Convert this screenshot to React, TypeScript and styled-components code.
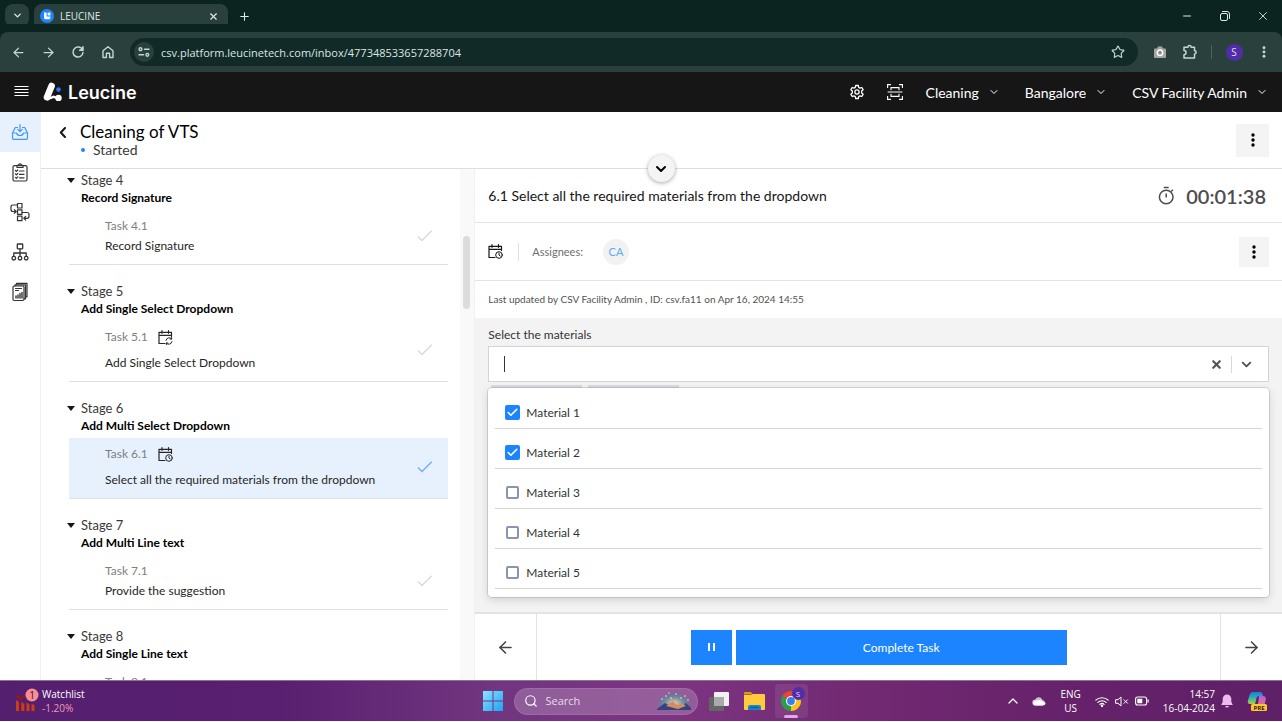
import React from "react";
import styled, { createGlobalStyle, css } from "styled-components";
import { ArrowLeft, ArrowRight, ChevronDown, Check, X, Plus, Star, Search, Minus } from "lucide-react";

const GlobalStyle = createGlobalStyle`
  *, *::before, *::after { box-sizing: border-box; }
  body { margin: 0; background: #fff; }
  button, input { font: inherit; color: inherit; }
  button { border: 0; padding: 0; background: none; cursor: pointer; }
  h1, h2, p, ul, ol { margin: 0; padding: 0; font-weight: 400; list-style: none; }
  a { color: inherit; text-decoration: none; }
  svg { display: block; flex: none; }
`;

const appFont = `Lato, "Liberation Sans", sans-serif`;
const systemFont = `"Open Sans", "Noto Sans", sans-serif`;

const Screen = styled.div`
  display: flex;
  flex-direction: column;
  height: 100vh;
  min-height: 480px;
  padding-bottom: 1px;
  overflow: hidden;
`;

/* ---------- Browser chrome ---------- */

const TabStrip = styled.div`
  display: flex;
  align-items: flex-end;
  height: 32px;
  flex: none;
  padding-left: 5px;
  background: #0b2420;
  color: #dfe9e6;
  font-family: ${systemFont};
  font-size: 10px;
`;

const TabMenuButton = styled.button`
  display: grid;
  place-items: center;
  width: 24px;
  height: 23px;
  margin: 0 5px 5px 0;
  border-radius: 8px;
  background: #2a403c;
`;

const Tab = styled.div`
  display: flex;
  align-items: center;
  gap: 6px;
  width: 194px;
  height: 28px;
  margin-top: 4px;
  padding: 0 9px 4px 6px;
  border-radius: 8px 8px 0 0;
  background: #2a403c;
  line-height: 16px;

  span { flex: 1; }
`;

const NewTabButton = styled.button`
  display: grid;
  place-items: center;
  width: 32px;
  height: 32px;
`;

const WindowControls = styled.div`
  display: flex;
  align-items: center;
  height: 32px;
  margin-left: auto;
`;

const WindowButton = styled.button`
  display: grid;
  place-items: center;
  width: 38px;
  height: 32px;
`;

const Toolbar = styled.div`
  display: flex;
  align-items: center;
  height: 40px;
  flex: none;
  padding: 0 3px;
  border-radius: 8px 8px 0 0;
  background: #2a403c;
  box-shadow: 0 -8px 0 #0b2420;
  color: #c4d8d3;
  font-family: ${systemFont};
`;

const ToolButton = styled.button`
  display: grid;
  place-items: center;
  width: 30px;
  height: 28px;
`;

const AddressBar = styled.label`
  display: flex;
  align-items: center;
  flex: 1;
  height: 28px;
  min-width: 0;
  margin: 0 7px;
  padding: 0 5px 0 4px;
  border-radius: 14px;
  background: #122a27;
  font-size: 11px;

  input {
    flex: 1;
    min-width: 0;
    padding: 0 7px;
    border: 0;
    outline: 0;
    background: none;
    color: #d9e6e2;
  }
`;

const SiteInfo = styled.span`
  display: grid;
  place-items: center;
  width: 20px;
  height: 20px;
  border-radius: 50%;
  background: #2a403c;
`;

const ToolDivider = styled.span`
  width: 1px;
  height: 14px;
  margin: 0 7px 0 6px;
  background: #48625c;
`;

const ProfileBadge = styled.span<{ $size: number }>`
  display: grid;
  place-items: center;
  width: ${(p) => p.$size}px;
  height: ${(p) => p.$size}px;
  border-radius: 50%;
  background: #512da8;
  color: #e4dcf6;
  font-family: ${systemFont};
  font-size: ${(p) => (p.$size > 14 ? 10 : 8)}px;
  line-height: 12px;
`;

/* ---------- Application header ---------- */

const AppHeader = styled.header`
  display: flex;
  align-items: center;
  height: 40px;
  flex: none;
  padding: 0 14px;
  background: #161616;
  color: #fff;
  font-family: ${appFont};
  font-size: 14px;
`;

const Brand = styled.a`
  display: flex;
  align-items: center;
  gap: 5px;
  margin: 0 auto 0 14px;
  font-family: Inter, sans-serif;
  font-size: 18px;
  font-weight: 600;
`;

const HeaderIcon = styled.button`
  display: grid;
  place-items: center;
  width: 38px;
  height: 40px;
`;

const HeaderMenus = styled.nav`
  display: flex;
  gap: 25px;
  margin-left: 12px;
`;

const HeaderMenu = styled.button`
  display: flex;
  align-items: center;
  gap: 9px;
  height: 40px;
`;

/* ---------- Workspace ---------- */

const Workspace = styled.div`
  display: flex;
  flex: 1;
  min-height: 0;
  background: #fff;
  color: #161616;
  font-family: ${appFont};
`;

const Rail = styled.nav`
  display: flex;
  flex-direction: column;
  width: 41px;
  flex: none;
  border-right: 1px solid #f0f0f0;
  color: #333;
`;

const RailLink = styled.a<{ $active?: boolean }>`
  display: grid;
  place-items: center;
  height: 40px;
  ${(p) => p.$active && css`background: #e7f1fd; color: #3f97ff;`}
`;

const Page = styled.main`
  display: flex;
  flex-direction: column;
  flex: 1;
  min-width: 0;
`;

const JobHeader = styled.div`
  position: relative;
  display: flex;
  align-items: center;
  height: 57px;
  flex: none;
  padding: 0 13px 0 15px;
  border-bottom: 1px solid #dedede;
`;

const BackButton = styled.button`
  display: grid;
  place-items: center;
  align-self: flex-start;
  width: 14px;
  height: 20px;
  margin: 10px 10px 0 0;
`;

const JobTitle = styled.div`
  flex: 1;

  h1 { font-size: 17px; line-height: 20px; color: #000; }
`;

const JobState = styled.p`
  display: flex;
  align-items: center;
  gap: 8px;
  font-size: 14px;
  line-height: 16px;
  color: #393939;

  &::before {
    content: "";
    width: 4px;
    height: 4px;
    margin-left: 1px;
    border-radius: 50%;
    background: #1d84ff;
  }
`;

const MoreButton = styled.button<{ $size: number }>`
  display: grid;
  place-items: center;
  width: ${(p) => p.$size}px;
  height: ${(p) => p.$size}px;
  background: #f4f4f4;
  color: #000;
`;

const CollapseButton = styled.button`
  position: absolute;
  left: 50%;
  bottom: -14px;
  z-index: 2;
  display: grid;
  place-items: center;
  width: 27px;
  height: 27px;
  margin-left: -14px;
  border-radius: 50%;
  background: #f4f4f4;
  box-shadow: 0 1px 4px rgba(0, 0, 0, 0.35);
  color: #000;
`;

const Columns = styled.div`
  display: flex;
  flex: 1;
  min-height: 0;
`;

const StageColumn = styled.aside`
  display: flex;
  width: 35%;
  flex: none;
`;

const StageList = styled.ol`
  flex: 1;
  min-width: 0;
  padding: 3px 12px 0 28px;
  overflow: hidden;
`;

const StageItem = styled.li`
  margin-bottom: 18px;
  font-size: 12px;
  line-height: 17px;
`;

const StageHead = styled.button`
  display: grid;
  grid-template-columns: 12px auto;
  padding-bottom: 4px;
  text-align: left;
  color: #393939;

  svg { margin: 6px 0 0 -2px; }
  span { font-size: 13px; }
  strong { grid-column: 2; color: #000; font-weight: 700; }
`;

const TaskLink = styled.a<{ $active?: boolean }>`
  display: flex;
  align-items: center;
  padding: 7px 15px 10px 36px;
  border-bottom: 1px solid #e0e0e0;
  color: ${(p) => (p.$active ? "#6fb0ff" : "#dadada")};
  background: ${(p) => (p.$active ? "#e7f1fd" : "transparent")};
`;

const TaskText = styled.div`
  flex: 1;
  color: #262626;
`;

const TaskLabel = styled.div<{ $scheduled?: boolean }>`
  display: flex;
  align-items: flex-start;
  gap: 10px;
  height: ${(p) => (p.$scheduled ? 23 : 17)}px;
  margin-bottom: 3px;
  color: #808080;

  svg { color: #262626; margin-top: 2px; }
`;

const ScrollTrack = styled.div`
  width: 15px;
  flex: none;
  padding: 67px 4px 0 3px;
  background: #f9f9f9;
  border-right: 1px solid #f0f0f0;
`;

const ScrollThumb = styled.div`
  height: 73px;
  border-radius: 4px;
  background: #dcdcdc;
`;

/* ---------- Task panel ---------- */

const TaskPanel = styled.section`
  display: flex;
  flex-direction: column;
  flex: 1;
  min-width: 0;
`;

const PanelRow = styled.div<{ $height: number }>`
  display: flex;
  align-items: center;
  height: ${(p) => p.$height}px;
  flex: none;
  padding: 0 13px;
  border-bottom: 1px solid #e3e3e3;

  h2 { flex: 1; font-size: 14px; line-height: 20px; }
`;

const Timer = styled.div`
  display: flex;
  align-items: center;
  gap: 11px;
  padding-right: 3px;
  color: #4d4d4d;
  font-size: 20px;
  font-weight: 600;
`;

const Assignees = styled.div`
  display: flex;
  align-items: center;
  flex: 1;
  height: 18px;
  margin-left: 15px;
  padding-left: 13px;
  border-left: 1px solid #e0e0e0;
  color: #6f6f6f;
  font-size: 11px;
`;

const Avatar = styled.span`
  display: grid;
  place-items: center;
  width: 26px;
  height: 26px;
  margin-left: 20px;
  border-radius: 50%;
  background: #f2f2f2;
  color: #5ea8ff;
`;

const UpdateNote = styled.p`
  padding: 10px 13px;
  color: #525252;
  font-size: 10px;
  line-height: 17px;
`;

const FieldArea = styled.div`
  flex: 1;
  min-height: 0;
  padding: 8px 13px 0;
  background: #f3f3f3;
  font-size: 12px;
  line-height: 17px;
  color: #333;
`;

const FieldLabel = styled.label`
  display: block;
  margin-bottom: 3px;
`;

const SelectBox = styled.div`
  position: relative;
`;

const SelectControl = styled.div`
  display: flex;
  align-items: center;
  height: 36px;
  padding: 0 7px 0 15px;
  border: 1px solid #d4d4d4;
  background: #fff;
  color: #525252;

  input {
    flex: 1;
    min-width: 0;
    height: 16px;
    padding: 0;
    border: 0;
    border-left: 1px solid #333;
    outline: 0;
    caret-color: transparent;
  }
`;

const ControlButton = styled.button`
  display: grid;
  place-items: center;
  width: 30px;
  height: 30px;

  & + & { border-left: 1px solid #d9d9d9; height: 17px; }
`;

const Chips = styled.div`
  display: flex;
  gap: 6px;
  padding: 3px 3px 0;
`;

const Chip = styled.span`
  width: 91px;
  height: 20px;
  background: #dadce3;
`;

const OptionMenu = styled.ul`
  position: absolute;
  top: 42px;
  left: 0;
  right: 0;
  z-index: 1;
  padding: 1px 7px 8px;
  border-radius: 4px;
  background: #fff;
  box-shadow: 0 0 0 1px rgba(0, 0, 0, 0.12), 0 3px 10px rgba(0, 0, 0, 0.14);
`;

const OptionRow = styled.li`
  height: 40px;
  border-bottom: 1px solid #d6d6d6;

  label { display: flex; align-items: center; gap: 6px; height: 46px; padding-left: 10px; }
`;

const TickBox = styled.span`
  display: grid;
  place-items: center;
  width: 15px;
  height: 15px;
  color: #fff;

  input {
    grid-area: 1 / 1;
    appearance: none;
    width: 13px;
    height: 13px;
    margin: 0;
    border: 2px solid #8a94b0;
    border-radius: 2px;
    background: #fff;
  }
  input:checked { width: 15px; height: 15px; border: 0; background: #1d84ff; }
  svg { grid-area: 1 / 1; z-index: 1; pointer-events: none; }
`;

const PanelFooter = styled.footer`
  display: flex;
  align-items: stretch;
  height: 68px;
  flex: none;
  border-top: 2px solid #e3e3e3;
`;

const StepButton = styled.button<{ $side: "left" | "right" }>`
  display: grid;
  place-items: center;
  width: 62px;
  color: #444;
  border-${(p) => (p.$side === "left" ? "right" : "left")}: 1px solid #e3e3e3;
`;

const Actions = styled.div`
  display: flex;
  align-items: center;
  justify-content: center;
  gap: 4px;
  flex: 1;
`;

const ActionButton = styled.button<{ $wide?: boolean }>`
  display: grid;
  place-items: center;
  height: 35px;
  width: ${(p) => (p.$wide ? "331px" : "41px")};
  background: #1d84ff;
  color: #fff;
  font-size: 12px;
`;

/* ---------- Desktop task bar ---------- */

const TaskBar = styled.div`
  display: grid;
  grid-template-columns: 1fr auto 1fr;
  align-items: center;
  height: 41px;
  flex: none;
  padding: 0 15px;
  border-top: 1px solid #8d7096;
  background: linear-gradient(90deg, #551f70 0%, #591f70 22%, #71357f 38%, #7d3583 52%, #732a73 66%, #66226a 82%, #5e2067 100%);
  color: #fff;
  font-family: ${systemFont};
  font-size: 10px;
  line-height: 14px;
`;

const Widget = styled.a`
  display: flex;
  align-items: center;
  gap: 3px;

  em { display: block; font-style: normal; color: #f09bb4; }
`;

const PinnedApps = styled.div`
  display: flex;
  align-items: center;
`;

const AppButton = styled.button<{ $open?: boolean }>`
  position: relative;
  display: grid;
  place-items: center;
  width: 36px;
  height: 34px;
  border-radius: 4px;

  ${(p) => p.$open && css`
    width: 33px;
    margin-left: 2px;
    background: rgba(255, 255, 255, 0.08);

    &::after {
      content: "";
      position: absolute;
      bottom: 0;
      width: 14px;
      height: 3px;
      border-radius: 2px;
      background: #e4a5ea;
    }
  `}
`;

const AppBadge = styled.span`
  position: absolute;
  top: 3px;
  right: 3px;
`;

const SearchBox = styled.label`
  display: flex;
  align-items: center;
  gap: 8px;
  width: 184px;
  height: 27px;
  margin: 0 3px;
  padding: 0 6px 0 9px;
  border: 1px solid rgba(255, 255, 255, 0.1);
  border-radius: 14px;
  background: rgba(255, 255, 255, 0.2);
  font-size: 11px;

  input { flex: 1; min-width: 0; padding: 0; border: 0; outline: 0; background: none; }
  input::placeholder { color: #e7dcea; opacity: 1; }
`;

const Tray = styled.div`
  display: flex;
  align-items: center;
  justify-content: flex-end;
  gap: 14px;
`;

const TrayText = styled.span<{ $align: "center" | "right" }>`
  text-align: ${(p) => p.$align};
  white-space: nowrap;
`;

const TrayGroup = styled.span`
  display: flex;
  align-items: center;
  gap: 6px;
`;

/* ---------- Icons ---------- */

const line = { fill: "none", stroke: "currentColor", strokeLinecap: "round", strokeLinejoin: "round" } as const;

const FavIcon = () => (
  <svg width="14" height="14" viewBox="0 0 14 14">
    <circle cx="7" cy="7" r="7" fill="#1d84ff" />
    <path d="M4 3.600h2.600v4h3.800v1.200c0 .9-.6 1.500-1.500 1.500H5.500C4.600 10.300 4 9.700 4 8.800z" fill="#fff" />
    <rect x="7.600" y="3.600" width="2.800" height="2.900" fill="#fff" />
  </svg>
);
const RestoreIcon = () => (
  <svg width="10" height="10" viewBox="0 0 10 10" {...line}>
    <rect x=".5" y="2.500" width="7" height="7" rx="1.500" />
    <path d="M2.500.5H7a2.500 2.500 0 0 1 2.500 2.500v4.500" />
  </svg>
);
const ReloadIcon = () => (
  <svg width="14" height="14" viewBox="0 0 14 14" {...line} strokeWidth="1.500">
    <path d="M11.600 5A5 5 0 1 0 12 7.500" />
    <path d="M12 1.800v3.400H8.600" fill="currentColor" />
  </svg>
);
const HomeIcon = () => (
  <svg width="14" height="14" viewBox="0 0 14 14" {...line} strokeWidth="1.400">
    <path d="M2 5.700 7 1.700l5 4v6.800H8.600V8.200H5.400v4.300H2z" />
  </svg>
);
const TuneIcon = () => (
  <svg width="12" height="12" viewBox="0 0 12 12" {...line} strokeWidth="1.400">
    <circle cx="2.500" cy="3.200" r="1.400" />
    <path d="M6.500 3.200H11M1 8.800h4.500" />
    <circle cx="9.300" cy="8.800" r="1.400" />
  </svg>
);
const CameraIcon = () => (
  <svg width="14" height="14" viewBox="0 0 14 14">
    <path d="M2 3.500h2L5 1.500h4l1 2h2q1 0 1 1V12q0 1-1 1H2q-1 0-1-1V4.500q0-1 1-1z" fill="#a5a5a5" />
    <circle cx="7" cy="7.800" r="2.700" fill="#8a8a8a" stroke="#fff" strokeWidth="1.500" />
  </svg>
);
const PuzzleIcon = () => (
  <svg width="16" height="16" viewBox="0 0 16 16" {...line} strokeWidth="1.500">
    <path d="M2 3.200h3.900a1.600 1.600 0 0 1 3.200 0H12.500v3.500a1.600 1.600 0 0 1 0 3.200v4H2v-3.200a2 2 0 0 0 0-4.100z" />
  </svg>
);
const DotsIcon = ({ size = 14 }: { size?: number }) => (
  <svg width={size} height={size} viewBox="0 0 14 14" fill="currentColor">
    <circle cx="7" cy="2" r="1.700" /><circle cx="7" cy="7" r="1.700" /><circle cx="7" cy="12" r="1.700" />
  </svg>
);
const LinesIcon = () => (
  <svg width="15" height="14" viewBox="0 0 15 14" stroke="currentColor" strokeWidth="1">
    <path d="M.5 1.500h14M.5 4.500h14M.5 7.500h14M.5 10.500h14" />
  </svg>
);
const LogoIcon = () => (
  <svg width="20" height="20" viewBox="0 0 20 20" fill="none">
    <path d="M8.600 4 4 15.300" stroke="#fff" strokeWidth="6.600" strokeLinecap="round" />
    <path d="m5 17 5.500-2.200 4.500 1.400" stroke="#fff" strokeWidth="2.400" />
    <circle cx="15.500" cy="15.900" r="3.200" fill="#fff" />
    <circle cx="15.500" cy="7.600" r="2.300" fill="#2f74ff" />
  </svg>
);
const GearIcon = () => (
  <svg width="16" height="16" viewBox="0 0 16 16" {...line} strokeWidth="1.300">
    <path d="M6.700 1.500h2.600l.4 1.900 1.300.7 1.800-.6 1.300 2.200-1.400 1.300v2l1.400 1.300-1.300 2.200-1.800-.6-1.300.7-.4 1.900H6.700l-.4-1.900-1.300-.7-1.800.6-1.300-2.200L3.300 9V7L1.900 5.700l1.300-2.200 1.800.6 1.300-.7z" />
    <circle cx="8" cy="8" r="2.100" />
  </svg>
);
const ScanIcon = () => (
  <svg width="16" height="16" viewBox="0 0 16 16" fill="none" stroke="currentColor" strokeWidth="1.100">
    <path d="M.6 4V.6H4M12 .6h3.400V4M15.400 12v3.400H12M4 15.400H.6V12M.6 8h14.800M4 6.300V3.600h8v2.700M4 9.700v2.700h8V9.700" />
  </svg>
);
const InboxIcon = () => (
  <svg width="18" height="18" viewBox="0 0 18 18" {...line} strokeWidth="1.200">
    <path d="M9 1.500v7M6.700 6.400 9 8.700l2.300-2.300M6.500 4.500H4.300L1.500 10v5q0 1.300 1.300 1.300h12.400q1.300 0 1.300-1.300v-5l-2.800-5.500h-2.200M1.500 10h4q.6 2.500 3.500 2.500t3.500-2.500h4" />
  </svg>
);
const ChecklistIcon = () => (
  <svg width="18" height="19" viewBox="0 0 18 19" {...line} strokeWidth="1.200">
    <rect x="2" y="2.700" width="14" height="15.300" rx="1.500" />
    <path d="M6 4.500V2.300h1.500a1.500 1.500 0 0 1 3 0H12v2.200zM4.500 7.500l.9.900L6.800 7M4.500 11l.9.900 1.400-1.400M4.500 14.400l.9.900 1.400-1.400M8.500 8H13M8.500 11.400H13M8.500 14.800H13" />
  </svg>
);
const FlowIcon = () => (
  <svg width="20" height="20" viewBox="0 0 20 20" {...line} strokeWidth="1.200">
    <rect x="7.500" y="1.500" width="4.500" height="4.500" /><rect x="7.500" y="7.800" width="4.500" height="4.500" /><rect x="7.500" y="14.200" width="4.500" height="4.500" />
    <path d="M7.500 3H3Q1 3 1 5v2.500q0 2 2 2h3M4.300 7.700 6.200 9.500l-1.900 1.800M12 10.500h5q2 0 2 2v1.800q0 2-2 2h-3M15.700 14.500l-1.900 1.800 1.900 1.800" />
  </svg>
);
const TreeIcon = () => (
  <svg width="18" height="18" viewBox="0 0 18 18" {...line} strokeWidth="1.300">
    <rect x="6.300" y="1" width="5.400" height="4.800" rx=".5" />
    <path d="M9 5.800v7.500M2.800 13.300V10h12.400v3.300" />
    <circle cx="2.800" cy="15.200" r="1.800" /><circle cx="9" cy="15.200" r="1.800" /><circle cx="15.200" cy="15.200" r="1.800" />
  </svg>
);
const ReportIcon = () => (
  <svg width="18" height="20" viewBox="0 0 18 20" {...line} strokeWidth="1.200">
    <rect x="2" y="4" width="11" height="14.500" rx="1.200" />
    <path d="M4 4V2.800h10.500v14H13M5.500 2.800V1.300H16v13.500h-1.500M4.500 6.500h6M4.500 8.500h3" />
    <path d="M5 16v-2M7 16v-3M9 16v-4.500M11 16v-5.500" strokeWidth="1.400" />
  </svg>
);
const CalendarIcon = ({ repeat }: { repeat?: boolean }) => (
  <svg width="15" height="15" viewBox="0 0 15 15" {...line} strokeWidth="1.200">
    <path d="M13.500 6.500V2.300H1V13.500h6M1 5.300h12.500M4 .7v2.600M10.500.7v2.600" />
    {repeat ? (
      <path d="M8 10.300a3.200 3.200 0 0 1 5.600-1.300V7.500M13.600 9h-1.500M14 11.700a3.200 3.200 0 0 1-5.600 1.300v1.500M8.400 13h1.500" strokeWidth="1" />
    ) : (
      <>
        <circle cx="11" cy="11" r="3.300" strokeWidth="1" />
        <path d="M11 9.200V11l1.200 1" strokeWidth="1" />
      </>
    )}
  </svg>
);
const CaretIcon = () => (
  <svg width="8" height="5" viewBox="0 0 8 5" fill="#161616"><path d="M0 0h8L4 5z" /></svg>
);
const TickIcon = () => (
  <svg width="16" height="12" viewBox="0 0 16 12" fill="none" stroke="currentColor" strokeWidth="1.500">
    <path d="m1 6.500 4 4L14.800.8" />
  </svg>
);
const StopwatchIcon = () => (
  <svg width="17" height="19" viewBox="0 0 17 19" {...line} strokeWidth="1.500" strokeLinecap="butt">
    <circle cx="8.200" cy="11" r="6.800" />
    <path d="M5.700 1.400h5M8.200 7.500V11.500M13 5.500l2-1.700" />
  </svg>
);
const PauseIcon = () => (
  <svg width="7" height="8" viewBox="0 0 7 8" fill="currentColor"><path d="M0 0h2v8H0zM5 0h2v8H5z" /></svg>
);

const WatchlistIcon = () => (
  <svg width="24" height="26" viewBox="0 0 24 26">
    <path d="M1 7.500 6 11l4-4" stroke="#8e1c1c" strokeWidth="2.500" fill="none" />
    <path d="M1 12l3 2v9H1zM6.300 14l3 2v7h-3zM11.500 14.500l3 2v6.500h-3zM16.500 16l3 1v6h-3z" fill="#cf3e12" />
    <circle cx="17" cy="7" r="6.500" fill="#f98e95" />
    <text x="17" y="10.500" textAnchor="middle" fontSize="10" fill="#33151d">1</text>
  </svg>
);
const WindowsIcon = () => (
  <svg width="20" height="20" viewBox="0 0 20 20">
    <defs>
      <linearGradient id="winFill" x1="0" y1="0" x2="1" y2="1">
        <stop offset="0" stopColor="#8be2ff" /><stop offset="1" stopColor="#1ba2f5" />
      </linearGradient>
    </defs>
    <path d="M0 0h9.500v9.500H0zM10.500 0H20v9.500h-9.500zM0 10.500h9.500V20H0zM10.500 10.500H20V20h-9.500z" fill="url(#winFill)" />
  </svg>
);
const SceneIcon = () => (
  <svg width="34" height="20" viewBox="0 0 34 20">
    <defs>
      <radialGradient id="glow" cx=".5" cy=".6" r=".55">
        <stop offset="0" stopColor="#ecd0a0" /><stop offset=".5" stopColor="#6f8fa0" /><stop offset="1" stopColor="#49799a" stopOpacity="0" />
      </radialGradient>
    </defs>
    <ellipse cx="17" cy="10" rx="17" ry="10" fill="url(#glow)" />
    <path d="M0 18 8 12l5 3 8 3 8-6 5 5v2H0z" fill="#33457e" />
    <path d="m9 15 7-5 5 5 4-3 4 3-8 3z" fill="#d98a63" />
    <g fill="#f6e6c9">
      <circle cx="5" cy="8" r=".8" /><circle cx="9" cy="5" r=".8" /><circle cx="14" cy="7" r=".8" /><circle cx="19" cy="3" r=".8" />
      <circle cx="24" cy="7" r=".8" /><circle cx="28" cy="5" r=".8" /><circle cx="31" cy="9" r=".8" /><circle cx="12" cy="2" r=".7" />
    </g>
  </svg>
);
const TaskViewIcon = () => (
  <svg width="20" height="19" viewBox="0 0 20 19">
    <rect x="5" width="15" height="14" rx="1" fill="#f1f1f1" />
    <rect y="5" width="15" height="14" rx="1" fill="#666" />
    <rect x="5" y="5" width="10" height="9" fill="#aaa" />
  </svg>
);
const FolderIcon = () => (
  <svg width="21" height="18" viewBox="0 0 21 18">
    <path d="M0 1q0-1 1-1h6l2 2.500H0z" fill="#dc9c0c" />
    <path d="M0 3h7l2-1h11q1 0 1 1v14q0 1-1 1H1q-1 0-1-1z" fill="#ffcb3d" />
    <path d="M4 18v-3q0-2 2-2h9q2 0 2 2v3z" fill="#1683cf" />
    <path d="M6.500 15.500h8" stroke="#0b5b97" strokeWidth="1.200" />
  </svg>
);
const ChromeIcon = () => (
  <svg width="20" height="20" viewBox="0 0 20 20">
    <path d="M10 10 1.340 5A10 10 0 0 1 18.660 5z" fill="#e94435" />
    <path d="M10 10 18.660 5A10 10 0 0 1 10 20z" fill="#fcc31e" />
    <path d="M10 10v10A10 10 0 0 1 1.340 5z" fill="#2e9d4b" />
    <circle cx="10" cy="10" r="5" fill="#fff" /><circle cx="10" cy="10" r="3.900" fill="#3b7ded" />
  </svg>
);
const CloudIcon = () => (
  <svg width="14" height="10" viewBox="0 0 14 10">
    <path d="M3.500 9.500a3 3 0 0 1-.3-6A4 4 0 0 1 10.500 4a2.800 2.800 0 0 1 .3 5.500z" fill="#cfc0d3" />
    <path d="M3.500 9.500a2.500 2.500 0 0 1-1-4.700L8 4l5.700 3q-.2 2.300-2.900 2.500z" fill="#fff" />
  </svg>
);
const WifiIcon = () => (
  <svg width="14" height="11" viewBox="0 0 14 11" {...line} strokeWidth="1.100">
    <path d="M.8 4.200a9 9 0 0 1 12.400 0M2.800 6.400a6 6 0 0 1 8.400 0M4.900 8.400a3 3 0 0 1 4.200 0" />
    <circle cx="7" cy="9.700" r=".7" fill="currentColor" />
  </svg>
);
const MuteIcon = () => (
  <svg width="14" height="11" viewBox="0 0 14 11" {...line}>
    <path d="M1 3.700h2L6 1v9L3 7.300H1zM9 3.800l3.500 3.500M12.500 3.800 9 7.300" />
  </svg>
);
const BatteryIcon = () => (
  <svg width="14" height="10" viewBox="0 0 14 10">
    <rect x=".6" y="1" width="11" height="8" rx="2" fill="none" stroke="#fff" strokeWidth="1.100" />
    <path d="M2.300 2.700h5v4.600h-5zM12.500 3.500h1.200v3h-1.200z" fill="#fff" />
  </svg>
);
const BellIcon = () => (
  <svg width="12" height="14" viewBox="0 0 12 14" fill="#eeb8f0">
    <path d="M6 .5a4.300 4.300 0 0 1 4.300 4.300v3L11.800 11H.2l1.500-3.200v-3A4.300 4.300 0 0 1 6 .5zM4.200 12h3.600a1.800 1.500 0 0 1-3.600 0z" />
  </svg>
);
const CopilotIcon = () => (
  <svg width="20" height="20" viewBox="0 0 20 20">
    <defs>
      <linearGradient id="coLeft" x1="0" y1="0" x2="0" y2="1">
        <stop offset="0" stopColor="#2277e0" /><stop offset=".5" stopColor="#27b6b0" /><stop offset="1" stopColor="#b7c93c" />
      </linearGradient>
      <linearGradient id="coRight" x1="0" y1="0" x2="0" y2="1">
        <stop offset="0" stopColor="#b65be8" /><stop offset="1" stopColor="#f2795a" />
      </linearGradient>
    </defs>
    <path d="M6 1h7q2 0 2.500 2l.5 2h-4q-2 0-2.500 2L8 13H3q-3 0-2-4l2-6q.6-2 3-2z" fill="url(#coLeft)" />
    <path d="M12 5h4q3.500 0 2.700 4L17 15q-.5 2-3 2H8q2 0 2.500-2l1-5z" fill="url(#coRight)" />
    <rect x="4" y="13" width="16" height="7" rx="1.500" fill="#ffc72c" />
    <text x="12" y="18.500" textAnchor="middle" fontSize="6" fontWeight="700" fill="#222">PRE</text>
  </svg>
);

/* ---------- Data ---------- */

type Schedule = "repeat" | "once";
interface Stage { id: number; title: string; task: string; schedule?: Schedule; active?: boolean }

const stages: Stage[] = [
  { id: 4, title: "Record Signature", task: "Record Signature" },
  { id: 5, title: "Add Single Select Dropdown", task: "Add Single Select Dropdown", schedule: "repeat" },
  { id: 6, title: "Add Multi Select Dropdown", task: "Select all the required materials from the dropdown", schedule: "once", active: true },
  { id: 7, title: "Add Multi Line text", task: "Provide the suggestion" },
  { id: 8, title: "Add Single Line text", task: "Add Single Line text" },
];

const materials = [
  { name: "Material 1", checked: true },
  { name: "Material 2", checked: true },
  { name: "Material 3", checked: false },
  { name: "Material 4", checked: false },
  { name: "Material 5", checked: false },
];

const railItems = [
  { label: "Inbox", icon: <InboxIcon />, active: true },
  { label: "Jobs", icon: <ChecklistIcon /> },
  { label: "Processes", icon: <FlowIcon /> },
  { label: "Ontology", icon: <TreeIcon /> },
  { label: "Reports", icon: <ReportIcon /> },
];

export default function App() {
  return (
    <Screen>
      <GlobalStyle />
      <TabStrip>
        <TabMenuButton aria-label="Search tabs"><ChevronDown size={11} strokeWidth={3} /></TabMenuButton>
        <Tab>
          <FavIcon />
          <span>LEUCINE</span>
          <button aria-label="Close tab"><X size={11} strokeWidth={2.5} /></button>
        </Tab>
        <NewTabButton aria-label="New tab"><Plus size={13} /></NewTabButton>
        <WindowControls>
          <WindowButton aria-label="Minimize"><Minus size={12} /></WindowButton>
          <WindowButton aria-label="Restore"><RestoreIcon /></WindowButton>
          <WindowButton aria-label="Close"><X size={14} strokeWidth={1.5} /></WindowButton>
        </WindowControls>
      </TabStrip>

      <Toolbar>
        <ToolButton aria-label="Back"><ArrowLeft size={15} /></ToolButton>
        <ToolButton aria-label="Forward"><ArrowRight size={15} /></ToolButton>
        <ToolButton aria-label="Reload"><ReloadIcon /></ToolButton>
        <ToolButton aria-label="Home"><HomeIcon /></ToolButton>
        <AddressBar>
          <SiteInfo><TuneIcon /></SiteInfo>
          <input aria-label="Address" defaultValue="csv.platform.leucinetech.com/inbox/477348533657288704" />
          <ToolButton aria-label="Bookmark"><Star size={14} /></ToolButton>
        </AddressBar>
        <ToolButton aria-label="Screenshot"><CameraIcon /></ToolButton>
        <ToolButton aria-label="Extensions"><PuzzleIcon /></ToolButton>
        <ToolDivider />
        <ToolButton aria-label="Profile"><ProfileBadge $size={17}>S</ProfileBadge></ToolButton>
        <ToolButton aria-label="Browser menu"><DotsIcon size={12} /></ToolButton>
      </Toolbar>

      <AppHeader>
        <button aria-label="Open navigation"><LinesIcon /></button>
        <Brand href="#"><LogoIcon />Leucine</Brand>
        <HeaderIcon aria-label="Settings"><GearIcon /></HeaderIcon>
        <HeaderIcon aria-label="Scan code"><ScanIcon /></HeaderIcon>
        <HeaderMenus>
          {["Cleaning", "Bangalore", "CSV Facility Admin"].map((name) => (
            <HeaderMenu key={name}>{name}<ChevronDown size={12} /></HeaderMenu>
          ))}
        </HeaderMenus>
      </AppHeader>

      <Workspace>
        <Rail aria-label="Main">
          {railItems.map((item) => (
            <RailLink key={item.label} href="#" aria-label={item.label} $active={item.active}>{item.icon}</RailLink>
          ))}
        </Rail>
        <Page>
          <JobHeader>
            <BackButton aria-label="Back to inbox">
              <svg width="8" height="11" viewBox="0 0 8 11" {...line} strokeWidth="2"><path d="M6 1 1.800 5.500 6 10" /></svg>
            </BackButton>
            <JobTitle>
              <h1>Cleaning of VTS</h1>
              <JobState>Started</JobState>
            </JobTitle>
            <MoreButton $size={33} aria-label="Job actions"><DotsIcon /></MoreButton>
            <CollapseButton aria-label="Show job details"><ChevronDown size={16} strokeWidth={3} /></CollapseButton>
          </JobHeader>

          <Columns>
            <StageColumn>
              <StageList>
                {stages.map((stage) => (
                  <StageItem key={stage.id}>
                    <StageHead>
                      <CaretIcon />
                      <span>Stage {stage.id}</span>
                      <strong>{stage.title}</strong>
                    </StageHead>
                    <TaskLink href="#" $active={stage.active}>
                      <TaskText>
                        <TaskLabel $scheduled={!!stage.schedule}>
                          {`Task ${stage.id}.1`}
                          {stage.schedule && <CalendarIcon repeat={stage.schedule === "repeat"} />}
                        </TaskLabel>
                        <p>{stage.task}</p>
                      </TaskText>
                      <TickIcon />
                    </TaskLink>
                  </StageItem>
                ))}
              </StageList>
              <ScrollTrack><ScrollThumb /></ScrollTrack>
            </StageColumn>

            <TaskPanel>
              <PanelRow $height={54}>
                <h2>6.1 Select all the required materials from the dropdown</h2>
                <Timer><StopwatchIcon />00:01:38</Timer>
              </PanelRow>
              <PanelRow $height={58}>
                <CalendarIcon />
                <Assignees>Assignees:<Avatar>CA</Avatar></Assignees>
                <MoreButton $size={30} aria-label="Task actions"><DotsIcon /></MoreButton>
              </PanelRow>
              <UpdateNote>Last updated by CSV Facility Admin , ID: csv.fa11 on Apr 16, 2024 14:55</UpdateNote>

              <FieldArea>
                <FieldLabel htmlFor="materials">Select the materials</FieldLabel>
                <SelectBox>
                  <SelectControl>
                    <input id="materials" type="text" role="combobox" aria-expanded="true" aria-controls="material-options" />
                    <ControlButton aria-label="Clear"><X size={13} strokeWidth={4} /></ControlButton>
                    <ControlButton aria-label="Toggle options"><ChevronDown size={15} strokeWidth={3} /></ControlButton>
                  </SelectControl>
                  <Chips><Chip /><Chip /></Chips>
                  <OptionMenu id="material-options">
                    {materials.map((m) => (
                      <OptionRow key={m.name}>
                        <label>
                          <TickBox>
                            <input type="checkbox" defaultChecked={m.checked} />
                            {m.checked && <Check size={13} strokeWidth={3} />}
                          </TickBox>
                          {m.name}
                        </label>
                      </OptionRow>
                    ))}
                  </OptionMenu>
                </SelectBox>
              </FieldArea>

              <PanelFooter>
                <StepButton $side="left" aria-label="Previous task"><ArrowLeft size={19} /></StepButton>
                <Actions>
                  <ActionButton aria-label="Pause"><PauseIcon /></ActionButton>
                  <ActionButton $wide>Complete Task</ActionButton>
                </Actions>
                <StepButton $side="right" aria-label="Next task"><ArrowRight size={19} /></StepButton>
              </PanelFooter>
            </TaskPanel>
          </Columns>
        </Page>
      </Workspace>

      <TaskBar>
        <Widget href="#"><WatchlistIcon /><span>Watchlist<em>-1.20%</em></span></Widget>
        <PinnedApps>
          <AppButton aria-label="Start"><WindowsIcon /></AppButton>
          <SearchBox>
            <Search size={14} />
            <input type="text" aria-label="Search" placeholder="Search" />
            <SceneIcon />
          </SearchBox>
          <AppButton aria-label="Task view"><TaskViewIcon /></AppButton>
          <AppButton aria-label="File explorer"><FolderIcon /></AppButton>
          <AppButton $open aria-label="Chrome"><ChromeIcon /><AppBadge><ProfileBadge $size={13}>S</ProfileBadge></AppBadge></AppButton>
        </PinnedApps>
        <Tray>
          <svg width="10" height="6" viewBox="0 0 10 6" {...line} strokeWidth="1.300"><path d="M1 5l4-4 4 4" /></svg>
          <CloudIcon />
          <TrayText $align="center">ENG<br />US</TrayText>
          <TrayGroup><WifiIcon /><MuteIcon /><BatteryIcon /></TrayGroup>
          <TrayGroup>
            <TrayText $align="right">14:57<br />16-04-2024</TrayText>
            <BellIcon />
          </TrayGroup>
          <CopilotIcon />
        </Tray>
      </TaskBar>
    </Screen>
  );
}
